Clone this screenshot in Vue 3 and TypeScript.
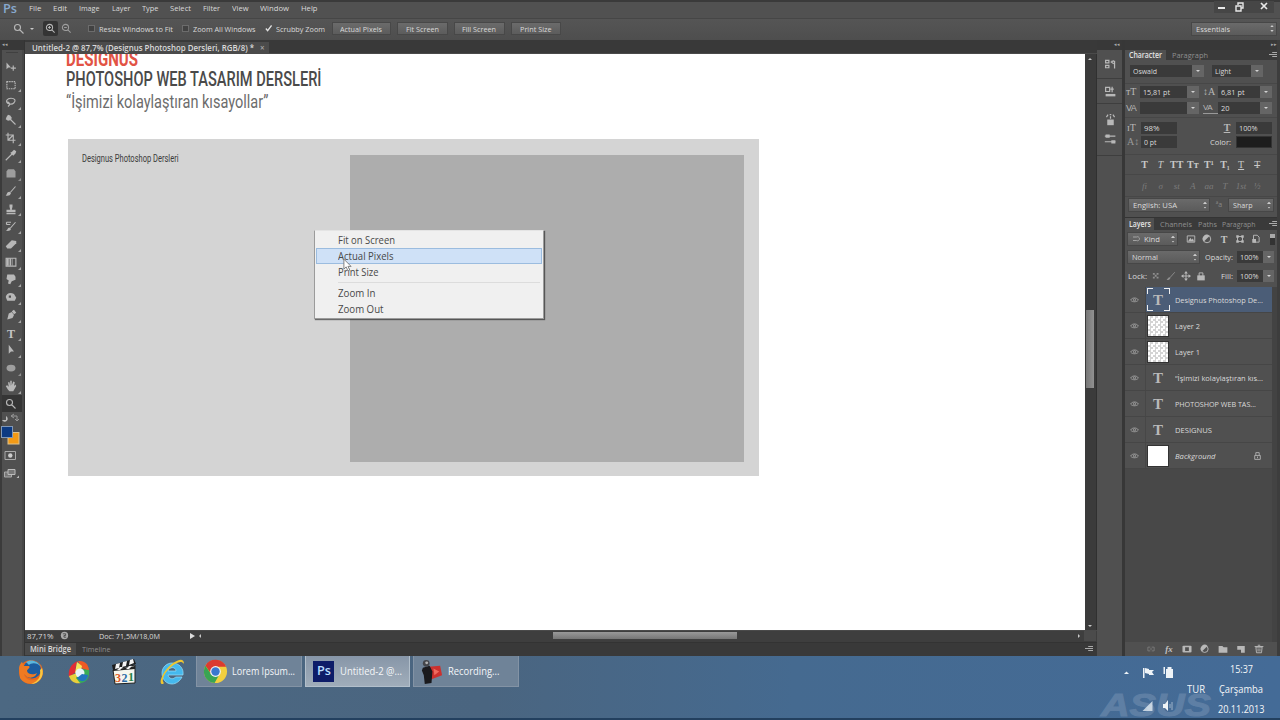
<script setup lang="ts">
interface Glyph { s?: string; f?: string; t?: string; corner?: boolean; active?: boolean }

// Stretches a label horizontally so that it occupies the given width.
const vFit = {
  mounted(el: HTMLElement, binding: { value: number }) {
    const natural = el.getBoundingClientRect().width
    if (!natural) return
    el.style.transform = `scaleX(${binding.value / natural})`
    el.style.marginRight = `${binding.value - natural}px`
  },
}

const menus: [string, number][] = [
  ['File', 12.5], ['Edit', 14], ['Image', 20.5], ['Layer', 18.5], ['Type', 16.5],
  ['Select', 21], ['Filter', 17], ['View', 16.5], ['Window', 29], ['Help', 16.5],
]
const viewButtons = [
  { label: 'Actual Pixels', w: 42, box: 'b1' },
  { label: 'Fit Screen', w: 33, box: 'b2' },
  { label: 'Fill Screen', w: 34, box: 'b2' },
  { label: 'Print Size', w: 31.5, box: 'b3' },
]
const tools: Glyph[] = [
  { f: 'M2 2V11L4.5 8.5H8Z', s: 'M11 6V13M7.7 9.5H14.5' },
  { s: 'M2.5 3.5H13.5V13H2.5Z', corner: true },
  { s: 'M4 10C0 7 3 3 8 3S15 6 12 9S5 11 4 9S7 9 6 12L4 14', corner: true },
  { f: 'M2 4L4 1L7 2L9 5L8 8L4 9L1 7Z', s: 'M7 7L14 14', corner: true },
  { s: 'M4 1V11H14M1 4H11V15M4 11L11 4', corner: true },
  { f: 'M9 4L12 1L15 3L14 6L11 9L7 5Z', s: 'M10 6L3 13L1 15', corner: true },
  { f: 'M4 3H12L14 6V14H2V6Z', corner: true },
  { f: 'M1 14C3 13 2 9 6 9L8 11C7 14 4 15 1 14Z', s: 'M7 10L14 2', corner: true },
  { f: 'M6 2H10V5L9 9H14V12H2V9H7L6 5ZM2 13H14V15H2Z', corner: true },
  { f: 'M1 14C4 14 3 10 6 10L8 12C7 15 3 15 1 14Z', s: 'M7 11L14 3M2 3H8M2 3V6M2 6H7', corner: true },
  { f: 'M1 11L9 3L15 4V7L8 14H3Z', corner: true },
  { s: 'M1.5 3H14.5V13.5H1.5Z', f: 'M2 3H5V13H2ZM6 3H8V13H6ZM9 3H10V13H9Z', corner: true },
  { f: 'M3 2H12L14 5V9L9 11L7 15L4 14L5 10L2 8Z', corner: true },
  { f: 'M1 8C2 3 7 1 12 4L15 9L13 13H3ZM5 6V9H8V6Z', corner: true },
  { f: 'M3 14L5 6L9 4L12 8L10 12ZM9 3L12 1L15 5L12 7Z', corner: true },
  { t: 'T', corner: true },
  { f: 'M5 1V13L8 10H12Z', corner: true },
  { f: 'M2 8A6 4.5 0 0 1 14 8A6 4.5 0 0 1 2 8', corner: true },
  { f: 'M4 13L1 8L3 7L5 9L4 3H6L7 8V1H9V7L11 2L13 3L12 8L14 6L15 8L11 15H6Z', corner: true },
  { s: 'M2 6A4 4 0 1 1 10 6A4 4 0 1 1 2 6M9 9L14 14', active: true },
]
const dock: Glyph[] = [
  { s: 'M2 3H6V6H2ZM2 9H6V12H2ZM9 4H13V13M12 3L9 5L12 7' },
  { s: 'M2 3H7V8H2ZM10 2V9M8 5H12', f: 'M2 11H14V14H2Z' },
  { f: 'M4 8H12V15H4Z', s: 'M8 7V4M3 5L5 2M11 2L13 5M7 2H9' },
  { s: 'M1 5H14M1 12H14', f: 'M2 3H7V7H2ZM9 10H14V14H9Z' },
]
const styleGlyphs = [
  { t: 'T', c: 'bold' }, { t: 'T', c: 'ital' }, { t: 'TT', c: 'bold' }, { t: 'Tт', c: 'bold' },
  { t: 'T¹', c: 'bold' }, { t: 'T₁', c: 'bold' }, { t: 'T', c: 'under' }, { t: 'T', c: 'strike' },
]
const openType = ['fi', 'σ', 'st', 'A', 'aa', 'T', '1st', '½']
const filterIcons: Glyph[] = [
  { s: 'M2 3H14V13H2Z', f: 'M3 12L7 6L9 9L11 7L13 12Z' },
  { s: 'M2 8A6 6 0 1 1 14 8A6 6 0 1 1 2 8', f: 'M3 12A6 6 0 0 1 12 3Z' },
  { t: 'T' },
  { s: 'M4 4H12V12H4Z', f: 'M2 2H6V6H2ZM10 2H14V6H10ZM2 10H6V14H2ZM10 10H14V14H10Z' },
  { s: 'M4 2H10L13 5V13H4Z', f: 'M2 8H8V14H2Z' },
]
const lockIcons: Glyph[] = [
  { f: 'M3 3H6V6H3ZM9 3H12V6H9ZM6 6H9V9H6ZM3 9H6V12H3ZM9 9H12V12H9Z' },
  { f: 'M1 14C3 13 3 10 6 10L7 12C6 14 3 15 1 14', s: 'M6 11L14 2' },
  { s: 'M8 2V14M2 8H14', f: 'M8 0L11 4H5ZM8 16L11 12H5ZM0 8L4 5V11ZM16 8L12 5V11Z' },
  { f: 'M2 7H14V15H2Z', s: 'M5 8V3H11V8' },
]
const layers = [
  { name: 'Designus Photoshop De...', w: 88, kind: 'text', selected: true },
  { name: 'Layer 2', w: 25, kind: 'pixels' },
  { name: 'Layer 1', w: 25, kind: 'pixels' },
  { name: '“İşimizi kolaylaştıran kıs...', w: 88, kind: 'text' },
  { name: 'PHOTOSHOP WEB TAS...', w: 81, kind: 'text' },
  { name: 'DESIGNUS', w: 37, kind: 'text' },
  { name: 'Background', w: 40.5, kind: 'white' },
]
const layerActions: Glyph[] = [
  { s: 'M7 5H3V11H7M9 5H13V11H9M6 8H10' },
  { t: 'fx' },
  { s: 'M2 3.5H14V12.5H2Z', f: 'M1 3H5V13H1ZM11 3H15V13H11ZM5 3H11V5H5ZM5 11H11V13H5Z' },
  { s: 'M2 8A5.5 5.5 0 1 1 13 8A5.5 5.5 0 1 1 2 8', f: 'M3 12A6 6 0 0 1 12 3Z' },
  { f: 'M1 3H7L9 5H15V14H1Z' },
  { f: 'M2 3H14V14H8V9H2Z' },
  { s: 'M3 5H13L12 14H4ZM1 4H15M6 2H10M6.5 7V12M9.5 7V12' },
]
const context: [string, number][][] = [
  [['Fit on Screen', 57], ['Actual Pixels', 55.5], ['Print Size', 40.5]],
  [['Zoom In', 37.5], ['Zoom Out', 45.5]],
]
</script>

<template>
  <div class="screen">
    <header class="menubar">
      <span class="pslogo"><b v-fit="14">Ps</b></span>
      <nav><span v-for="m in menus" :key="m[0]" v-fit="m[1]" class="t">{{ m[0] }}</span></nav>
      <div class="winctl">
        <svg viewBox="0 0 60 12"><path d="M4 7H11" stroke-width="2" /><path d="M22 5H27V10H22ZM24 4V2H29V7H27" stroke-width="1.4" /><path d="M47 2L53 8M53 2L47 8" stroke-width="1.7" /></svg>
      </div>
    </header>

    <div class="options">
      <svg class="i zoomtool" viewBox="0 0 16 16"><path d="M2 6A4 4 0 1 1 10 6A4 4 0 1 1 2 6M9 9L14 14" /></svg>
      <i class="down"></i>
      <span class="zin"><svg class="i" viewBox="0 0 16 16"><path d="M2 6.500A4.500 4.500 0 1 1 11 6.500A4.500 4.500 0 1 1 2 6.500M10 10L14 14M4.500 6.500H8.500M6.500 4.500V8.500" /></svg></span>
      <svg class="i zout" viewBox="0 0 16 16"><path d="M2 6.500A4.500 4.500 0 1 1 11 6.500A4.500 4.500 0 1 1 2 6.500M10 10L14 14M4.500 6.500H8.500" /></svg>
      <div class="check c1"><i></i><span v-fit="74" class="t">Resize Windows to Fit</span></div>
      <div class="check c2"><i></i><span v-fit="62.500" class="t">Zoom All Windows</span></div>
      <div class="check c3"><i class="on"><svg viewBox="0 0 8 8"><path d="M1 4L3 6.500L7.500 .5" /></svg></i><span v-fit="49" class="t">Scrubby Zoom</span></div>
      <div class="buttons">
        <span v-for="b in viewButtons" :key="b.label" class="btn" :class="b.box"><span v-fit="b.w" class="t">{{ b.label }}</span></span>
      </div>
      <span class="select ess"><span v-fit="34" class="t">Essentials</span><i class="ud"></i></span>
    </div>

    <main class="work">
      <aside class="toolcol">
        <div class="coltop"><span>◂◂</span></div>
        <div class="tools">
          <div class="grip"></div>
          <div v-for="(g, n) in tools" :key="n" class="tool" :class="{ active: g.active, dashed: n === 1, soft: n === 6 || n === 17 }">
            <svg class="i" viewBox="0 0 16 16"><path v-if="g.f" class="fill" :d="g.f" /><path v-if="g.s" :d="g.s" /><text v-if="g.t" x="8" y="14" text-anchor="middle">{{ g.t }}</text></svg>
            <i v-if="g.corner" class="corner"></i>
          </div>
          <svg class="swatches" viewBox="0 0 22 66">
            <path d="M2 7H6V3A3 3 0 1 1 2 7Z" fill="#bbb" /><path d="M12 3H17V7M14 1L11 3L14 5M15 6L17 8L19 6" stroke="#999" fill="none" />
            <rect x="8" y="19.500" width="11" height="11.500" fill="#f29a16" stroke="#dfc28c" />
            <rect x="1.500" y="13.500" width="11" height="11" fill="#0c3a82" stroke="#8198b6" />
            <path d="M5 38.500H15.500V46.500H5Z" stroke="#aaa" fill="none" /><circle cx="10.300" cy="42.500" r="2.200" fill="#ccc" />
            <path d="M4.500 59H11.500V64H4.500Z" stroke="#aaa" fill="#777" /><path d="M8 56.500H15V61.500H8Z" stroke="#bbb" fill="#777" /><path d="M19 65V62.500L16.500 65Z" fill="#bbb" />
          </svg>
        </div>
      </aside>

      <section class="center">
        <div class="tabbar"><div class="tab"><span v-fit="222" class="t">Untitled-2 @ 87,7% (Designus Photoshop Dersleri, RGB/8) *</span><span class="x">×</span></div></div>
        <div class="viewport">
          <div class="canvas">
            <div class="h1"><span v-fit="72">DESIGNUS</span></div>
            <div class="h2"><span v-fit="255.500">PHOTOSHOP WEB TASARIM DERSLERİ</span></div>
            <div class="h3"><span v-fit="202.500">“İşimizi kolaylaştıran kısayollar”</span></div>
            <div class="artboard">
              <div class="caption"><span v-fit="96.500">Designus Photoshop Dersleri</span></div>
              <div class="inner"></div>
            </div>
          </div>
          <div class="vscroll"><i class="up"></i><b></b><i class="down"></i></div>
        </div>
        <div class="status">
          <span v-fit="26.500" class="t zoomval">87,71%</span>
          <svg class="i statusicon" viewBox="0 0 16 16"><circle cx="8" cy="8" r="6.500" class="disc" /><path d="M5 5H10V8H7V11H11" /></svg>
          <span v-fit="61" class="t">Doc: 71,5M/18,0M</span>
          <i class="play"></i><i class="left"></i>
          <b class="hthumb"></b>
          <i class="right"></i><span class="knob"></span>
        </div>
        <div class="bottomtabs">
          <span class="bt on"><span v-fit="41" class="t">Mini Bridge</span></span>
          <span v-fit="28.500" class="t dim">Timeline</span>
          <span class="pm"></span>
        </div>
      </section>

      <aside class="dock">
        <div class="coltop"><span>◂◂</span></div>
        <div v-for="(g, n) in dock" :key="n" class="dockitem" :class="'d' + n">
          <svg class="i" viewBox="0 0 16 16"><path v-if="g.f" class="fill" :d="g.f" /><path v-if="g.s" :d="g.s" /></svg>
        </div>
      </aside>

      <aside class="panels">
        <div class="coltop r"><span>▸▸</span></div>
        <div class="ptabs">
          <span class="pt on p1"><span v-fit="33" class="t">Character</span></span>
          <span v-fit="36" class="t dim">Paragraph</span>
          <span class="pm"></span>
        </div>
        <div class="character">
          <div class="row fontrow">
            <span class="field"><span v-fit="24" class="t">Oswald</span></span><span class="cb"></span>
            <span class="field second"><span v-fit="16" class="t">Light</span></span><span class="cb"></span>
          </div>
          <div class="row sizerow">
            <span class="ti">тT</span><span class="field"><span v-fit="27" class="t">15,81 pt</span></span><span class="cb"></span>
            <span class="ti small">↕A</span><span class="field"><span v-fit="23.500" class="t">6,81 pt</span></span><span class="cb"></span>
          </div>
          <div class="row sizerow kern">
            <span class="ti">VA</span><span class="field"></span><span class="cb"></span>
            <span class="ti small box">VA</span><span class="field"><span v-fit="8.500" class="t">20</span></span><span class="cb"></span>
          </div>
          <div class="row scalerow">
            <span class="ti">ɪT</span><span class="field"><span v-fit="15.500" class="t">98%</span></span>
            <span class="ti u">T</span><span class="field"><span v-fit="18.500" class="t">100%</span></span>
          </div>
          <div class="row scalerow base">
            <span class="ti faded">A↕</span><span class="field"><span v-fit="12.500" class="t">0 pt</span></span>
            <span class="colorlabel"><span v-fit="21" class="t">Color:</span></span><span class="field black"></span>
          </div>
          <div class="glyphs"><span v-for="(g, n) in styleGlyphs" :key="n" :class="g.c">{{ g.t }}</span></div>
          <div class="glyphs ot"><span v-for="g in openType" :key="g">{{ g }}</span></div>
          <div class="row lang">
            <span class="select"><span v-fit="44" class="t">English: USA</span><i class="ud"></i></span>
            <span class="aa">ªa</span>
            <span class="select"><span v-fit="19.500" class="t">Sharp</span><i class="ud"></i></span>
          </div>
        </div>
        <div class="ptabs ltabs">
          <span class="pt on p2"><span v-fit="22" class="t">Layers</span></span>
          <span v-fit="32" class="t dim">Channels</span>
          <span v-fit="19" class="t dim">Paths</span>
          <span v-fit="33.500" class="t dim">Paragraph</span>
          <span class="pm"></span>
        </div>
        <div class="layercontrols">
          <div class="row kind">
            <span class="select"><svg class="i" viewBox="0 0 16 16"><path d="M2 4H9M2 11H9M9 4A4 4 0 1 1 9 11" /></svg><span v-fit="16" class="t">Kind</span><i class="ud"></i></span>
            <div class="ficons"><svg v-for="(g, n) in filterIcons" :key="n" class="i" viewBox="0 0 16 16"><path v-if="g.f" class="fill" :d="g.f" /><path v-if="g.s" :d="g.s" /><text v-if="g.t" x="8" y="14" text-anchor="middle">{{ g.t }}</text></svg></div>
            <span class="switch"></span>
          </div>
          <div class="row blend">
            <span class="select"><span v-fit="26" class="t">Normal</span><i class="ud"></i></span>
            <span v-fit="28" class="t">Opacity:</span>
            <span class="field"><span v-fit="18.500" class="t">100%</span></span><span class="cb"></span>
          </div>
          <div class="row lock">
            <span v-fit="19" class="t">Lock:</span>
            <div class="licons"><svg v-for="(g, n) in lockIcons" :key="n" class="i" viewBox="0 0 16 16"><path v-if="g.f" class="fill" :d="g.f" /><path v-if="g.s" :d="g.s" /></svg></div>
            <span v-fit="12" class="t">Fill:</span>
            <span class="field"><span v-fit="18.500" class="t">100%</span></span><span class="cb"></span>
          </div>
        </div>
        <div class="layers">
          <div v-for="l in layers" :key="l.name" class="layer" :class="{ selected: l.selected }">
            <span class="eye"><svg viewBox="0 0 16 12"><path d="M1 7C4 2 12 2 15 7C12 11 4 11 1 7Z" /><circle cx="8" cy="6.500" r="2" /></svg></span>
            <div class="lbody">
              <span class="thumb" :class="l.kind"><template v-if="l.kind === 'text'">T</template></span>
              <span v-fit="l.w" class="t" :class="{ it: l.kind === 'white' }">{{ l.name }}</span>
              <svg v-if="l.kind === 'white'" class="i padlock" viewBox="0 0 16 16"><path d="M3 7H13V14H3ZM5 7V2H11V7M8 9V12" /></svg>
            </div>
          </div>
        </div>
        <div class="lfoot"><svg v-for="(g, n) in layerActions" :key="n" class="i" :class="{ faint: n === 0 }" viewBox="0 0 16 16"><path v-if="g.f" class="fill" :d="g.f" /><path v-if="g.s" :d="g.s" /><text v-if="g.t" x="8" y="13" text-anchor="middle" class="fx">{{ g.t }}</text></svg></div>
      </aside>
    </main>

    <footer class="taskbar">
      <div class="pinned">
        <svg viewBox="0 0 28 28">
          <circle cx="14" cy="14" r="12" fill="#e8681c" /><circle cx="15" cy="11.500" r="9" fill="#1d5d9f" /><path d="M9 4C13 1 21 2 24 9C20 4 14 5 12 7Z" fill="#5cb7dc" />
          <path d="M2 10C3 5 5 4 5 4L7 8L12 8C14 10 10 11 10 13C11 17 17 17 20 15C18 21 10 21 7 16C8 22 16 25 24 19C20 27 8 28 3 20Z" fill="#ef7a22" /><path d="M25 10C28 18 22 26 14 26C22 23 24 18 23 12Z" fill="#f8c841" />
        </svg>
        <svg viewBox="0 0 28 28">
          <path d="M14 3C22 2 25 8 25 13L17 10Z" fill="#ed5a24" /><path d="M14 3C6 6 4 13 5 19L12 14C11 9 12 6 14 3Z" fill="#e22d35" /><path d="M5 18C7 24 11 26 17 25L13 15Z" fill="#e9d03b" /><path d="M25 12C26 20 22 25 16 25L12 20L18 11Z" fill="#39ad54" />
          <path d="M13 4L18 8L17 12L11 15Z" fill="#f6e75a" /><circle cx="16" cy="15" r="4.500" fill="#e8f4f8" /><path d="M13 20C17 25 23 24 24 17L18 16Z" fill="#2374bf" />
        </svg>
        <svg viewBox="0 0 28 28">
          <path d="M2 12L24 7V25L4 26Z" fill="#f6f6ee" stroke="#202020" /><path d="M1 7L23 1L25 6L2 12Z" fill="#1d1d1d" /><path d="M5 6L9 5L8 10L4 11ZM12 4L16 3L15 8L11 9ZM19 2L22 1L23 5L18 7Z" fill="#f5f5f5" />
          <path d="M2 12L24 8V11L2 13Z" fill="#222" /><path d="M6 12L9 9L12 9L9 12ZM15 11L18 8L21 8L18 11Z" fill="#f5f5f5" />
          <text x="4" y="24" class="n3">3</text><text x="10.500" y="23.500" class="n2">2</text><text x="17" y="23" class="n1">1</text>
        </svg>
        <svg viewBox="0 0 28 28">
          <path d="M24 19C22 23 18 26 14 26C8 26 4 21 4 15C4 9 9 5 14 5C21 5 26 10 25 17H10C11 21.500 16 21.500 17.500 19ZM10 13H18C18 8.500 11 8.500 10 13Z" fill="#45b9ee" stroke="#9be0fa" stroke-width=".7" fill-rule="evenodd" /><path d="M5 26C-1 27 5 12 15 5C21 1 26 0 26 6C23 2 18 5 13 9C6 15 3 23 6 25Z" fill="#efc62f" />
        </svg>
      </div>
      <div class="apps">
        <div class="app">
          <svg viewBox="0 0 26 26"><circle cx="13" cy="13" r="12" fill="#f2cf3f" /><path d="M2.500 7A12 12 0 0 1 24 8H13L9 16Z" fill="#da3b30" /><path d="M2.500 7A12 12 0 0 0 12 25L17 16L8 15Z" fill="#39a453" /><circle cx="13" cy="13" r="5.600" fill="#f2f2f2" /><circle cx="13" cy="13" r="4.400" fill="#3977ce" /></svg>
          <span v-fit="63" class="t">Lorem Ipsum...</span>
        </div>
        <div class="app on"><span class="psicon"><b v-fit="14">Ps</b></span><span v-fit="62" class="t">Untitled-2 @...</span></div>
        <div class="app">
          <svg viewBox="0 0 26 26"><path d="M10 8L22 7L24 17L13 21Z" fill="#cc302d" /><path d="M15 10L21 13L16 17Z" fill="#ef6a5e" /><path d="M4 9L11 7L14 13L13 25L6 26L5 17L3 12Z" fill="#1a1a1d" /><circle cx="7.500" cy="4.500" r="3.500" fill="#44464b" /><circle cx="8" cy="4" r="1.500" fill="#b2b2b2" /></svg>
          <span v-fit="51.500" class="t">Recording...</span>
        </div>
      </div>
      <svg class="brand" viewBox="0 0 116 26"><text x="3" y="24" textLength="110" lengthAdjust="spacingAndGlyphs">ASUS</text></svg>
      <div class="tray">
        <svg class="trayicons" viewBox="0 0 60 60">
          <path d="M2 18L4.500 15.500L7 18Z" /><path d="M21 12H22.500V22H21ZM23 12L27 13V18L23 17ZM27 14H32L30 16L32 19H27Z" /><path d="M44 13H51V22H44ZM45.500 11H49.500V13H45.500ZM41.500 11H43V18H41.500Z" /><path d="M20.500 55L30.500 45V55Z" opacity=".75" /><path d="M41 48H43L46 44V55L43 52H41Z" /><path d="M48 48V52M50 46V54" class="wave" />
        </svg>
        <div class="lang2"><span v-fit="18">TUR</span></div>
        <div class="clock"><span v-fit="23">15:37</span><span v-fit="44">Çarşamba</span><span v-fit="46.500">20.11.2013</span></div>
      </div>
    </footer>

    <div class="context">
      <template v-for="(group, gi) in context" :key="gi">
        <hr v-if="gi" />
        <div v-for="item in group" :key="item[0]" class="ci" :class="{ hot: item[0] === 'Actual Pixels' }"><span v-fit="item[1]">{{ item[0] }}</span></div>
      </template>
      <svg class="pointer" viewBox="0 0 10 16"><path d="M1 1V12L3.500 9.500L5.500 14L7.500 13L5.500 9H9Z" /></svg>
    </div>
  </div>
</template>

<style>
html, body { background: #505050; overflow: hidden; }
</style>
<style scoped>
* { box-sizing: border-box; }
.screen { position: relative; width: 1280px; height: 720px; overflow: hidden; display: flex; flex-direction: column; background: #505050; color: #dadada; font: 8px/10px "Open Sans", "Noto Sans", sans-serif; }
.screen span, .screen b { flex: none; white-space: nowrap; transform-origin: left center; }
.t { display: inline-block; }
i, b { display: block; }
.i { flex: none; width: 12px; height: 12px; fill: none; stroke: #b8b8b8; stroke-width: 1.5; display: block; }
.i .fill { fill: #b8b8b8; stroke: none; }
.i text { fill: #c4c4c4; stroke: none; font: bold 16px "Liberation Serif", serif; }
.i .fx { font: italic bold 14px "Liberation Serif", serif; }

.menubar { height: 18px; display: flex; align-items: center; border-top: 2px solid #3a3a3a; padding: 0 6px 4px 3px; background: #515151; }
.pslogo { width: 26px; color: #88a9cf; font: 600 13px/14px "Open Sans", sans-serif; }
.pslogo b, .psicon b { display: inline-block; font-weight: 600; }
.menubar nav { display: flex; gap: 11.850px; flex: 1; }
.winctl { width: 60px; height: 12px; background: #464646; margin-top: -3px; }
.winctl svg { display: block; fill: none; stroke: #e8e8e8; }
.options { height: 22px; display: flex; align-items: center; background: linear-gradient(#555, #4e4e4e); border-top: 1px solid #464646; padding: 0 4px 2px 13px; }
.down, .up, .left, .right, .play { flex: none; width: 0; height: 0; border: 2.500px solid transparent; }
.down { border-top-color: #c8c8c8; border-bottom: 0; }
.up { border-bottom-color: #c8c8c8; border-top: 0; }
.left { border-right-color: #c8c8c8; border-left: 0; }
.right { border-left-color: #c8c8c8; border-right: 0; }
.options > .down { margin-left: 5px; }
.zin { width: 15px; height: 15px; display: grid; place-items: center; background: #343434; margin-left: 9px; border-radius: 2px; }
.zin .i, .zout { width: 11px; height: 11px; }
.zout { margin-left: 3px; opacity: .75; }
.check { display: flex; align-items: center; gap: 4px; }
.check i { width: 7px; height: 7px; background: #424242; border: 1px solid #6c6c6c; }
.check i.on { border: 0; background: none; }
.check svg { display: block; fill: none; stroke: #e2e2e2; stroke-width: 1.500; }
.c1 { margin-left: 16px; } .c2 { margin-left: 9px; } .c3 { margin-left: 9px; }
.buttons { display: flex; gap: 8px; margin-left: 8px; flex: 1; }
.btn { height: 11px; display: flex; align-items: center; justify-content: center; background: linear-gradient(#6b6b6b, #5c5c5c); box-shadow: 0 0 0 1px #484848; }
.b1 { width: 57px; } .b2 { width: 49px; } .b3 { width: 48px; }
.select { display: flex; align-items: center; justify-content: space-between; background: linear-gradient(#6a6a6a, #5b5b5b); height: 12px; padding: 0 2px 0 4px; box-shadow: 0 0 0 1px #474747; }
.ud { width: 4px; height: 7px; background: linear-gradient(#ccc 0 2px, transparent 2px 5px, #ccc 5px); clip-path: polygon(50% 0, 100% 35%, 100% 65%, 50% 100%, 0 65%, 0 35%); }
.ess { width: 84px; }

.work { height: 616px; display: flex; flex: none; }
.coltop { height: 10px; background: #383838; color: #aaa; font-size: 5px; line-height: 9px; padding-left: 2px; flex: none; }
.toolcol { width: 25px; display: flex; flex-direction: column; background: #505050; border-right: 1px solid #343434; }
.tools { flex: 1; border-left: 2px solid #3b3b3b; border-right: 2px solid #474747; }
.grip { height: 8px; margin: 0 4px; background: linear-gradient(transparent 2px, #404040 2px 3px, transparent 3px); }
.tool { height: 17.720px; display: flex; align-items: center; padding: 0 0 0 2.500px; position: relative; }
.tool .i { width: 12px; height: 12px; }
.tool.dashed path { stroke-dasharray: 2 1; }
.tool.soft { opacity: .75; }
.tool.active { background: #353535; }
.corner { position: absolute; right: 1px; bottom: 1px; border-left: 3px solid transparent; border-bottom: 3px solid #a5a5a5; }
.swatches { display: block; width: 22px; height: 66px; margin-left: -2px; margin-top: .6px; }

.center { width: 1072px; display: flex; flex-direction: column; }
.tabbar { height: 14px; background: #393939; padding-top: 2px; border-bottom: 1px solid #4a4a4a; }
.tab { width: 244px; height: 12px; background: #4b4b4b; padding-left: 7px; display: flex; align-items: center; gap: 6px; font-weight: 600; }
.x { font-size: 8px; color: #aaa; }
.viewport { height: 576px; display: flex; }
.canvas { width: 1060px; background: #fff; overflow: hidden; padding-left: 41px; font-family: Roboto, "Noto Sans", sans-serif; }
.canvas span { display: inline-block; }
.h1 { height: 11px; font: bold 21px/12px Roboto, sans-serif; color: #e25345; margin-top: -1px; }
.h2 { font: 500 21px/22px Roboto, sans-serif; color: #4a4a4a; height: 22px; margin-top: 4px; }
.h3 { font: 400 18px/22px Roboto, sans-serif; color: #6c6c6c; height: 22px; margin-top: 1px; }
.artboard { width: 691px; height: 337px; margin: 26px 0 0 2px; background: #d4d4d4; display: flex; padding: 16px 15px 14px 14px; justify-content: space-between; }
.caption { font: 400 10.500px/11px Roboto, sans-serif; color: #3c3c3c; width: 98px; margin-top: -2px; }
.inner { width: 394px; height: 307px; background: #adadad; }
.vscroll { width: 12px; background: #3b3b3b; display: flex; flex-direction: column; align-items: center; padding: 4px 1px 3px 0; justify-content: space-between; border-right: 1px solid #303030; }
.vscroll b { width: 8px; height: 78px; margin-top: 12px; background: linear-gradient(90deg, #777, #919191); }
.status { height: 12px; background: #3e3e3e; display: flex; align-items: center; padding: 0 0 2px 2.500px; border-top: 1px solid #4a4a4a; }
.status .t { margin-top: 0; }
.zoomval { margin-left: -.5px; }
.statusicon { width: 9px; height: 9px; margin: 0 30px 0 6.500px; }
.disc { fill: #aaa; stroke: none; }
.statusicon path { stroke: #444; }
.play { border-left-color: #dedede; border-right: 0; border-width: 3px 0 3px 5px; margin-left: 29.500px; }
.status .left { margin-left: 4.500px; }
.hthumb { width: 184px; height: 7px; background: linear-gradient(#999, #767676); margin-left: 351.500px; }
.status .right { margin-left: 341.500px; }
.knob { width: 12px; height: 10px; background: #4b4b4b; margin-left: 4px; }
.bottomtabs { height: 14px; background: #393939; border-top: 1px solid #333; display: flex; align-items: center; gap: 6px; padding-bottom: 1px; }
.bt { background: #4b4b4b; height: 12px; width: 51px; padding: 1px 0 0 5px; font-weight: 600; }
.dim { color: #8f8f8f; }
.pm { width: 8px; height: 6px; margin-left: auto; margin-right: 4px; background: linear-gradient(#aaa 0 1px, transparent 1px 2px, #aaa 2px 3px, transparent 3px 4px, #aaa 4px 5px, transparent 5px); clip-path: polygon(40% 0, 100% 0, 100% 100%, 40% 100%, 40% 60%, 0 60%, 0 30%, 40% 30%); }

.dock { width: 25px; background: #505050; display: flex; flex-direction: column; }
.dock .coltop { padding-left: 17px; }
.dockitem { height: 29px; display: grid; place-items: center; padding-left: 1px; }
.dockitem .i { width: 13px; height: 13px; }
.d0, .d1 { border-bottom: 1px solid #3e3e3e; }
.d1 { height: 25px; } .d2 { height: 31px; } .d3 { border-bottom: 1px solid #3e3e3e; height: 24px; margin-top: -3px; align-items: start; }

.panels { width: 158px; display: flex; flex-direction: column; background: #505050; border-left: 3px solid #373737; border-right: 3px solid #3d3d3d; }
.coltop.r { text-align: right; padding-right: 0; }
.ptabs { height: 10px; background: #3a3a3a; display: flex; align-items: center; flex: none; }
.pt { height: 100%; background: #505050; padding-left: 4px; display: flex; align-items: center; font-weight: 600; color: #e4e4e4; }
.p1 { width: 41px; margin-right: 6px; } .p2 { width: 29px; margin-right: 6px; }
.ptabs .pm { margin-right: 0; }
.character { height: 157px; flex: none; }
.row { display: flex; align-items: center; }
.field { height: 12px; background: #3a3a3a; display: flex; align-items: center; padding-left: 3px; }
.cb { width: 12px; height: 12px; background: #656565; display: grid; place-items: center; }
.cb::after { content: ""; border: 2px solid transparent; border-top-color: #d2d2d2; border-bottom: 0; }
.fontrow { height: 24px; padding: 0 0 2px 5px; border-bottom: 1px solid #474747; }
.fontrow .field { width: 62px; } .fontrow .second { width: 39px; margin-left: 8px; }
.sizerow { height: 16px; padding-left: 1px; }
.sizerow .field { width: 47px; }
.sizerow .small { margin-left: 4px; width: 15px; }
.sizerow .small + .field { width: 42px; }
.ti { width: 14px; font: 10px/12px "Liberation Serif", serif; color: #b8b8b8; }
.faded { color: #999; }
.kern .ti { font: 9px/11px "Liberation Sans", sans-serif; letter-spacing: -.5px; }
.kern .box { border-bottom: 1px solid #999; font-size: 8px; }
.kern { height: 16px; }
.scalerow { padding-left: 2px; }
.kern + .scalerow { border-top: 1px solid #474747; margin-top: 1px; height: 20px; padding-top: 1px; }
.scalerow .field { width: 36px; }
.scalerow .u { width: 12px; margin-left: 44px; margin-right: 3px; text-decoration: underline; font-weight: bold; text-align: center; }
.scalerow .field + .colorlabel { margin-left: 33px; width: 26px; display: flex; }
.base { height: 10px; }
.scalerow .black { background: #1d1d1d; border: 1px solid #333; }
.glyphs { height: 20px; margin-top: 7px; padding-left: 11.500px; display: grid; grid-template-columns: repeat(8, 16.100px); align-items: center; justify-items: center; font: 10px/12px "Liberation Serif", serif; color: #c8c8c8; border-top: 1px solid #474747; }
.ot { margin-top: 0; height: 22px; color: #7c7c7c; font-size: 9px; font-style: italic; }
.bold { font-weight: bold; } .ital { font-style: italic; } .under { text-decoration: underline; } .strike { text-decoration: line-through; }
.lang { padding-left: 4px; height: 17px; border-top: 1px solid #474747; }
.lang .select:first-child { width: 80px; } .lang .select:last-child { width: 44px; }
.aa { width: 20px; text-align: center; color: #888; font-size: 7px; }
.ltabs { height: 13px; border-top: 1px solid #343434; }
.ltabs .dim + .dim { margin-left: 5.500px; }
.layercontrols { height: 57px; flex: none; }
.layercontrols .row { height: 18px; padding-left: 3px; }
.layercontrols .lock { height: 19px; margin-top: .5px; }
.kind .select { width: 49px; justify-content: flex-start; gap: 4px; }
.kind .select .i { width: 8px; height: 8px; }
.kind .select .ud { margin-left: auto; }
.ficons { display: flex; gap: 6.300px; margin-left: 9px; }
.ficons .i { width: 10px; height: 10px; }
.switch { width: 5px; height: 11px; margin-left: 9px; background: linear-gradient(#aaa 4px, #333 4px); }
.blend .select { width: 71px; margin-right: 6px; }
.blend .field, .lock .field { margin-left: 4px; width: 26px; }
.blend .cb, .lock .cb { width: 11px; }
.licons { display: flex; gap: 5px; margin-left: 4px; margin-right: 15px; }
.licons .i { width: 10px; height: 10px; }
.licons .i:nth-child(-n+2) { opacity: .6; }
.layers { height: 355px; background: #484848; border-right: 5px solid #434343; flex: none; }
.layer { height: 26px; display: flex; background: #505050; border-bottom: 1px solid #464646; }
.eye { width: 21px; border-right: 1px solid #474747; display: grid; place-items: center; }
.eye svg { width: 9px; height: 7px; fill: none; stroke: #a4a4a4; stroke-width: 1.500; margin-right: 2px; }
.lbody { flex: 1; display: flex; align-items: center; padding-left: 2px; }
.selected .lbody { background: #4b5d77; }
.thumb { width: 20px; height: 20px; margin-right: 7px; display: grid; place-items: center; font: bold 15px/20px "Liberation Serif", serif; color: #b9b9b9; }
.pixels { outline: 1px solid #333; background: conic-gradient(#d4d4d4 25%, #fff 0 50%, #d4d4d4 0 75%, #fff 0) 0 0 / 5px 5px; }
.white { background: #fff; outline: 1px solid #333; }
.selected .thumb { width: 23px; height: 23px; margin-left: -1.500px; margin-right: 5.500px; background: linear-gradient(#eee, #eee) 0 0 / 6px 1px, linear-gradient(#eee, #eee) 0 0 / 1px 6px, linear-gradient(#eee, #eee) 100% 0 / 6px 1px, linear-gradient(#eee, #eee) 100% 0 / 1px 6px, linear-gradient(#eee, #eee) 0 100% / 6px 1px, linear-gradient(#eee, #eee) 0 100% / 1px 6px, linear-gradient(#eee, #eee) 100% 100% / 6px 1px, linear-gradient(#eee, #eee) 100% 100% / 1px 6px; background-repeat: no-repeat; }
.it { font-style: italic; }
.padlock { width: 9px; height: 10px; margin-left: auto; margin-right: 10px; }
.lfoot { flex: 1; background: #505050; display: flex; align-items: center; padding-left: 21px; gap: 8px; }
.lfoot .i { width: 10px; height: 10px; }
.faint { opacity: .4; }

.taskbar { position: relative; height: 64px; display: flex; background: linear-gradient(90deg, #4c6882 0, #4a6580 38%, #456a90 62%, #446b97 100%); border-bottom: 2px solid #23405f; font: 11px/14px "Open Sans", sans-serif; color: #f4f6f8; }
.pinned { width: 196px; height: 31px; padding-left: 17px; display: flex; align-items: center; gap: 19px; flex: none; }
.pinned svg { width: 28px; height: 28px; flex: none; }
.n3, .n2, .n1 { font: bold 12px "Liberation Serif", serif; fill: #dd5926; } .n2 { fill: #2a6ca6; } .n1 { fill: #258349; }
.apps { display: flex; gap: 3px; height: 31px; }
.app { width: 105.500px; display: flex; align-items: center; background: #6f8398; border: 1px solid #8393a5; border-top: 0; }
.app svg { width: 25px; height: 25px; margin: 0 4px 0 6px; flex: none; }
.app:last-child svg { margin: 0 4px 0 5px; }
.app.on { background: linear-gradient(#8796a8, #a0adba); border-color: #b2bfcb; }
.psicon { width: 21px; height: 21px; background: #0d1c68; color: #b8dcff; font: 600 12px/20px "Open Sans", sans-serif; padding-left: 3.500px; margin: 0 5.500px 0 7.500px; }
.brand { position: absolute; left: 1098px; top: 36px; width: 116px; height: 26px; }
.brand text { font: italic bold 32px "Liberation Sans", sans-serif; fill: #7994b4; opacity: .5; stroke: #7994b4; stroke-width: 1; }
.tray { position: relative; margin-left: auto; display: flex; width: 158px; height: 62px; }
.trayicons { width: 60px; height: 60px; fill: #eef3f7; }
.wave { fill: none; stroke: #9db3c9; }
.lang2 { width: 34px; padding: 26px 0 0 5px; }
.lang2 span, .clock span { display: inline-block; }
.clock { display: flex; flex-direction: column; align-items: center; gap: 6px; padding-top: 6px; width: 50px; }

.context { position: absolute; left: 314px; top: 230px; width: 230px; height: 89px; background: #f0f0f0; border: 1px solid #9b9b9b; border-top-color: #e4e4e4; box-shadow: 1px 1px 1px rgba(0, 0, 0, .5); font: 11px/16px "Open Sans", "Noto Sans", sans-serif; color: #484848; padding: 1px 1px 0; }
.ci { height: 16px; padding-left: 21px; border: 1px solid transparent; line-height: 13px; }
.ci span { display: inline-block; }
.ci.hot { background: #cfe1f7; border-color: #9bbcdf; }
.context hr { border: 0; border-top: 1px solid #dcdcdc; margin: 2px 2px 2px 22px; }
.pointer { position: absolute; left: 28px; top: 27px; width: 9px; height: 15px; fill: #fff; stroke: #777; }
</style>
